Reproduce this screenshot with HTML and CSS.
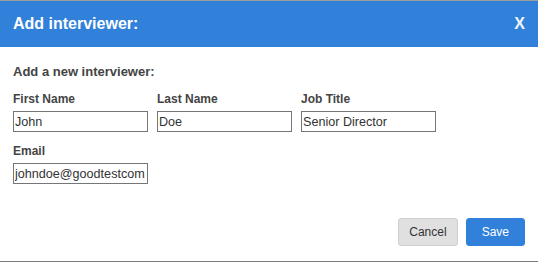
FILE: index.html
```html
<!DOCTYPE html>
<html lang="en">
<head>
    <meta charset="UTF-8">
    <meta name="viewport" content="width=device-width, initial-scale=1.0">
    <title>Add interviewer</title>
    <link rel="stylesheet" href="styles.css">
</head>
<body>
    <div class="dialog">
        <div class="dialog-header">
            <h2>Add interviewer:</h2>
            <span class="close">X</span>
        </div>

        <div class="dialog-body">
            <h3>Add a new interviewer:</h3>

            <div class="fields">
                <div class="field">
                    <label>First Name</label>
                    <input type="text" value="John">
                </div>
                <div class="field">
                    <label>Last Name</label>
                    <input type="text" value="Doe">
                </div>
                <div class="field">
                    <label>Job Title</label>
                    <input type="text" value="Senior Director">
                </div>
                <div class="field">
                    <label>Email</label>
                    <input type="text" value="johndoe@goodtestcom">
                </div>
            </div>

            <div class="actions">
                <button class="btn-cancel">Cancel</button>
                <button class="btn-save">Save</button>
            </div>
        </div>
    </div>
</body>
</html>
```

FILE: styles.css
```css
body { margin: 0; font-family: "Liberation Sans", Arial, sans-serif; background: #fff; }
.dialog { height: 260px; border-top: 1px solid #9c9c9c; border-bottom: 1px solid #7a7a7a; display: flex; flex-direction: column; }
.dialog-header { height: 46px; background: #3181db; color: #fff; display: flex; align-items: center; justify-content: space-between; padding: 0 13px; }
.dialog-header h2 { margin: 0; font-size: 16px; font-weight: bold; }
.close { font-size: 16px; font-weight: bold; color: #eef4fc; cursor: pointer; }
.dialog-body { flex: 1; padding: 17px 13px 0; }
.dialog-body h3 { margin: 0; font-size: 13px; line-height: 16px; color: #444; }
.fields { margin-top: 12px; display: grid; grid-template-columns: repeat(3, 135px); column-gap: 9px; row-gap: 12px; }
.field { display: flex; flex-direction: column; gap: 5px; }
.field label { font-size: 12px; line-height: 14px; font-weight: bold; color: #444; }
.field input { box-sizing: border-box; width: 135px; height: 21px; padding: 1px 1px; border: 1px solid #767676; border-radius: 0; font-family: inherit; font-size: 12.6px; color: #333; }
.actions { margin-top: 34px; display: flex; justify-content: flex-end; gap: 8px; }
.actions button { height: 28px; border-radius: 3px; font-family: inherit; font-size: 12px; cursor: pointer; }
.btn-cancel { padding: 0 10px; background: #e0e0e0; border: 1px solid #cfcfcf; color: #333; }
.btn-save { padding: 0 15px; background: #3181db; border: 1px solid #3181db; color: #fff; }
```
